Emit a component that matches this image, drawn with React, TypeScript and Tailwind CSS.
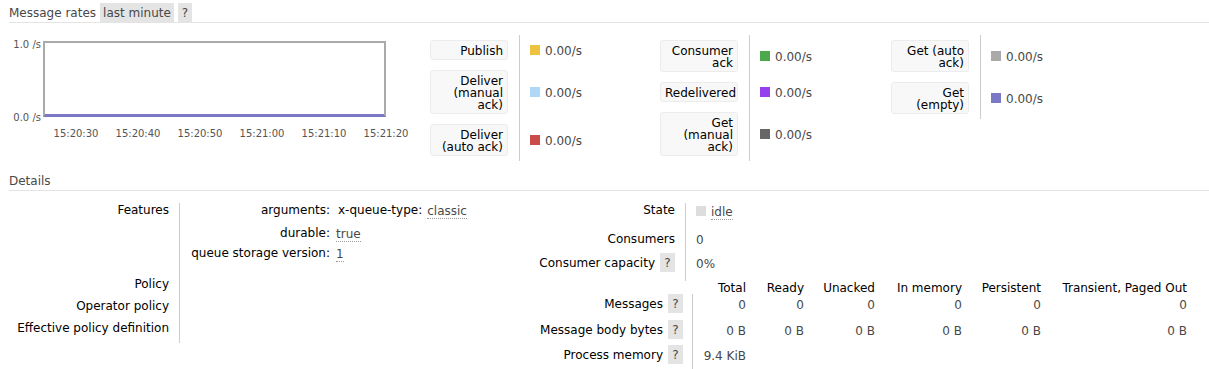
import React from "react";

type LegendRow = { l: string[]; c: string };

const legend: LegendRow[][] = [
  [
    { l: ["Publish"], c: "bg-[#edc240]" },
    { l: ["Deliver", "(manual", "ack)"], c: "bg-[#afd8f8]" },
    { l: ["Deliver", "(auto ack)"], c: "bg-[#cb4b4b]" },
  ],
  [
    { l: ["Consumer", "ack"], c: "bg-[#4da74d]" },
    { l: ["Redelivered"], c: "bg-[#9440ed]" },
    { l: ["Get", "(manual", "ack)"], c: "bg-[#666666]" },
  ],
  [
    { l: ["Get (auto", "ack)"], c: "bg-[#aaaaaa]" },
    { l: ["Get", "(empty)"], c: "bg-[#7c79c4]" },
  ],
];

const colWidths = ["w-[230px]", "w-[231px]", "w-[231px]"];

const ticks = ["15:20:30", "15:20:40", "15:20:50", "15:21:00", "15:21:10", "15:21:20"];

function Help({ className = "" }: { className?: string }) {
  return (
    <span className={`inline-block h-[19px] leading-[20px] w-[15px] text-center bg-[#e4e4e4] text-[#484848] ${className}`}>?</span>
  );
}

function LegendCol({ rows, w }: { rows: LegendRow[]; w: string }) {
  return (
    <div className={`${w} shrink-0 grid grid-cols-[89px_auto] content-start`}>
      {rows.map((r, i) => (
        <React.Fragment key={i}>
          <div className="py-[5px] pr-[11px]">
            <div className="bg-[#f8f8f8] border border-[#ececec] rounded-[3px] text-right pr-[4px] pl-[4px] pt-[4px] pb-[2px] leading-[12px] text-black">
              {r.l.map((s, j) => (
                <div key={j} className="whitespace-nowrap">{s}</div>
              ))}
            </div>
          </div>
          <div className="border-l border-[#cccccc] pl-[10px] flex items-center">
            <span className={`inline-block w-[10px] h-[10px] ${r.c}`} />
            <span className="ml-[5px] pt-[1px]">0.00/s</span>
          </div>
        </React.Fragment>
      ))}
    </div>
  );
}

const msgCols = ["Total", "Ready", "Unacked", "In memory", "Persistent", "Transient, Paged Out"];

export default function App() {
  return (
    <div className="font-['DejaVu_Sans',Verdana,sans-serif] text-[12px] text-[#484848] pl-[9px] w-[1209px] h-[369px] overflow-hidden bg-white">
      {/* Message rates header */}
      <div className="flex items-end h-[23px] border-b border-[#e4e4e4]">
        <span className="h-[19px] leading-[21px]">Message rates</span>
        <span className="ml-[4px] h-[19px] leading-[21px] px-[3px] bg-[#e4e4e4]">last minute</span>
        <span className="ml-[4px] h-[19px] leading-[21px] w-[14px] text-center bg-[#e4e4e4]">?</span>
      </div>

      <div className="flex h-[148px] pt-[12px]">
        {/* chart */}
        <div className="w-[421px] shrink-0 pt-[6px]">
          <div className="flex">
            <div className="w-[34px] pr-[2px] h-[83px] -mt-[1px] flex flex-col justify-between items-end text-[10px] leading-[10px] text-[#545454]">
              <span>1.0 /s</span>
              <span>0.0 /s</span>
            </div>
            <div className="w-[343px] h-[76px] border-2 border-[#aaaaaa] border-b-[#7c79c4] bg-white flex flex-col justify-end">
              <div className="h-[1px] bg-[#7c79c4]" />
            </div>
          </div>
          <div className="flex ml-[36px] mt-[6px] text-[10px] leading-[10px] text-[#545454]">
            {ticks.map((t) => (
              <span key={t} className="w-[62px] text-center">{t}</span>
            ))}
          </div>
        </div>
        {legend.map((rows, i) => (
          <LegendCol key={i} rows={rows} w={colWidths[i]} />
        ))}
      </div>

      {/* Details header */}
      <div className="h-[20px] border-b border-[#e4e4e4]">
        <span className="block h-[19px] leading-[20px]">Details</span>
      </div>

      <div className="flex pt-[12px] leading-[14px]">
        {/* left facts */}
        <div className="w-[511px] shrink-0">
          <div className="flex h-[74px]">
            <div className="w-[170px] pr-[10px] text-right text-black">Features</div>
            <div className="border-l border-[#cccccc] flex-1">
              <div className="flex h-[23px]">
                <div className="w-[150px] text-right text-black">arguments:</div>
                <div className="pl-[8px] text-black">x-queue-type:</div>
                <div className="pl-[5px] pt-[1px]">
                  <span className="border-b border-dotted border-[#999]">classic</span>
                </div>
              </div>
              <div className="flex h-[20px]">
                <div className="w-[150px] text-right text-black">durable:</div>
                <div className="pl-[6px] pt-[1px]">
                  <span className="border-b border-dotted border-[#999]">true</span>
                </div>
              </div>
              <div className="flex h-[20px]">
                <div className="w-[150px] text-right text-black">queue storage version:</div>
                <div className="pl-[6px] pt-[1px]">
                  <span className="border-b border-dotted border-[#999]">1</span>
                </div>
              </div>
            </div>
          </div>
          {["Policy", "Operator policy", "Effective policy definition"].map((p) => (
            <div key={p} className="flex h-[22px]">
              <div className="w-[170px] pr-[10px] text-right text-black whitespace-nowrap">{p}</div>
              <div className="border-l border-[#cccccc] flex-1" />
            </div>
          ))}
        </div>

        {/* right facts */}
        <div className="flex-1">
          <div className="flex h-[29px]">
            <div className="w-[165px] pr-[10px] text-right text-black">State</div>
            <div className="border-l border-[#cccccc] pl-[10px] flex items-start pt-[3px]">
              <span className="inline-block w-[10px] h-[10px] bg-[#dddddd]" />
              <span className="ml-[5px] -mt-[1px] border-b border-dotted border-[#999] leading-[14px]">idle</span>
            </div>
          </div>
          <div className="flex h-[21px]">
            <div className="w-[165px] pr-[10px] text-right text-black">Consumers</div>
            <div className="border-l border-[#cccccc] pl-[10px] pt-[1px]">0</div>
          </div>
          <div className="flex h-[28px]">
            <div className="w-[165px] pr-[10px] flex justify-end items-start text-black">
              <span className="leading-[20px]">Consumer capacity</span>
              <Help className="ml-[5px]" />
            </div>
            <div className="border-l border-[#cccccc] pl-[10px] pt-[4px]">0%</div>
          </div>

          {/* messages table */}
          <div className="grid grid-cols-[172px_54px_58px_71px_87px_79px_146px]">
            <div className="h-[13px]" />
            {msgCols.map((c) => (
              <div key={c} className="h-[13px] text-right text-black whitespace-nowrap">{c}</div>
            ))}

            <div className="h-[26px] pr-[9px] flex justify-end items-start text-black">
              <span className="leading-[20px]">Messages</span>
              <Help className="ml-[5px]" />
            </div>
            <div className="border-l border-[#cccccc] text-right pt-[4px]">0</div>
            {[0, 1, 2, 3, 4].map((i) => (
              <div key={i} className="text-right pt-[4px]">0</div>
            ))}

            <div className="h-[25px] pr-[9px] flex justify-end items-start text-black">
              <span className="leading-[20px]">Message body bytes</span>
              <Help className="ml-[5px]" />
            </div>
            <div className="border-l border-[#cccccc] text-right pt-[4px]">0 B</div>
            {[0, 1, 2, 3, 4].map((i) => (
              <div key={i} className="text-right pt-[4px]">0 B</div>
            ))}

            <div className="h-[26px] pr-[9px] flex justify-end items-start text-black">
              <span className="leading-[20px]">Process memory</span>
              <Help className="ml-[5px]" />
            </div>
            <div className="border-l border-[#cccccc] text-right pt-[4px] whitespace-nowrap">9.4 KiB</div>
            {[0, 1, 2, 3, 4].map((i) => (
              <div key={i} />
            ))}
          </div>
        </div>
      </div>
    </div>
  );
}
